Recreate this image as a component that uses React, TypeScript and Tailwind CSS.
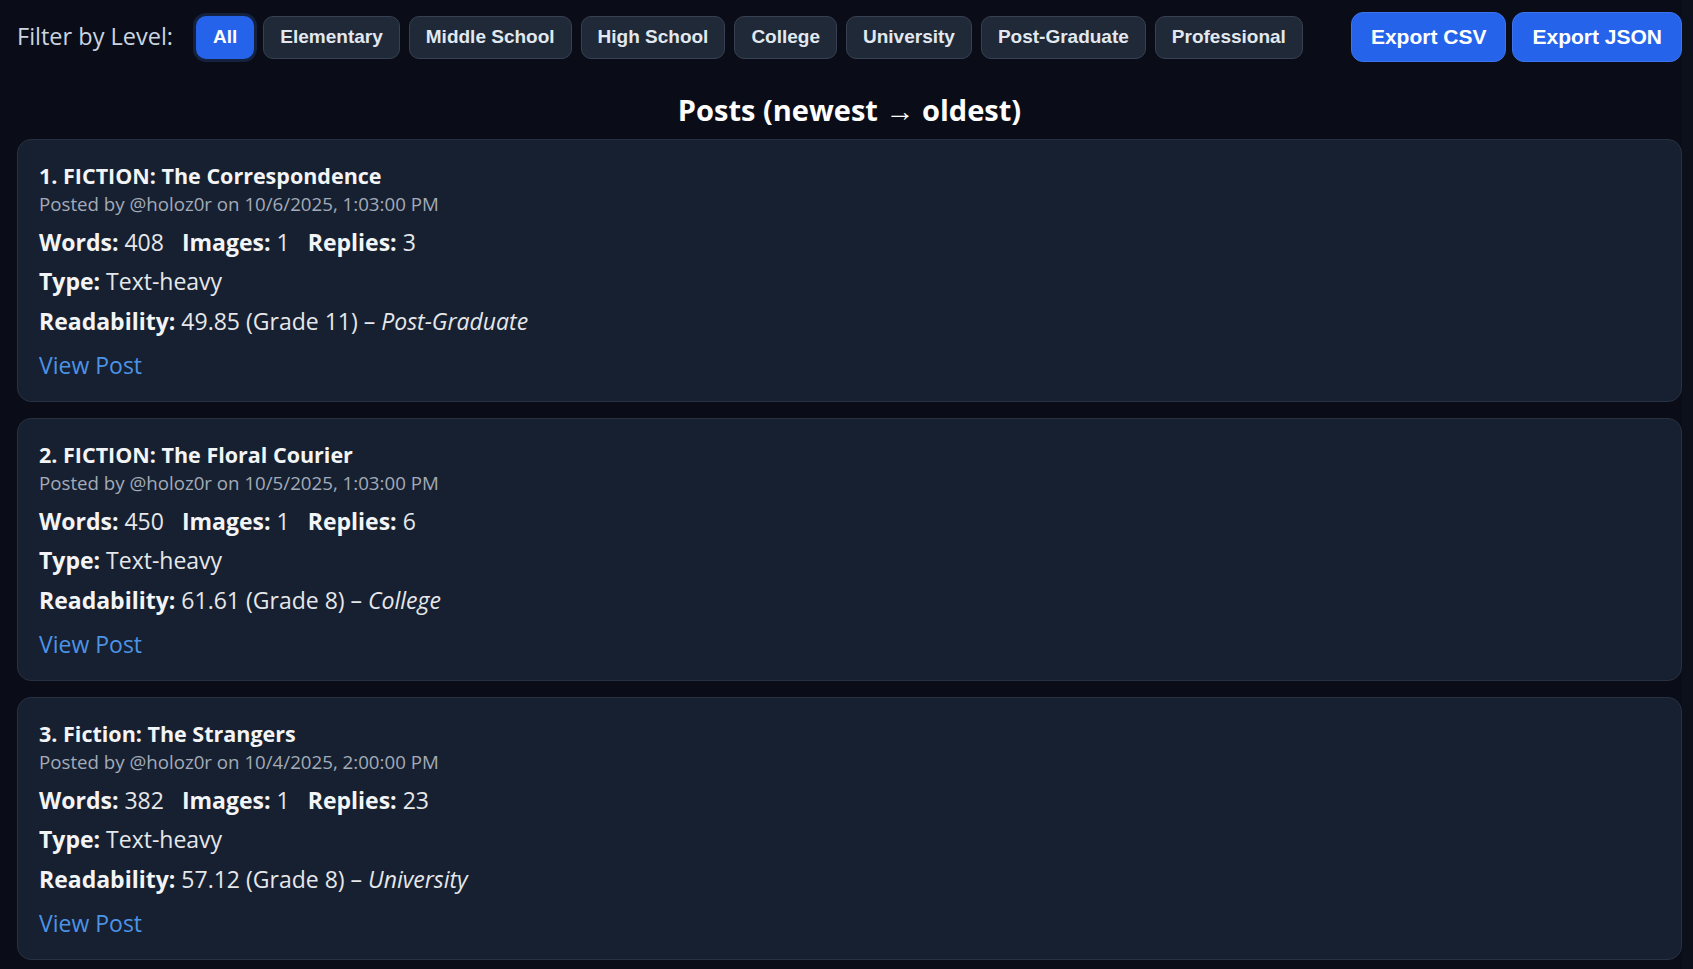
import React from 'react';

type Post = {
  title: string;
  date: string;
  words: number;
  images: number;
  replies: number;
  type: string;
  score: string;
  grade: number;
  level: string;
};

const LEVELS = [
  'All',
  'Elementary',
  'Middle School',
  'High School',
  'College',
  'University',
  'Post-Graduate',
  'Professional',
];

const POSTS: Post[] = [
  {
    title: 'FICTION: The Correspondence',
    date: '10/6/2025, 1:03:00 PM',
    words: 408,
    images: 1,
    replies: 3,
    type: 'Text-heavy',
    score: '49.85',
    grade: 11,
    level: 'Post-Graduate',
  },
  {
    title: 'FICTION: The Floral Courier',
    date: '10/5/2025, 1:03:00 PM',
    words: 450,
    images: 1,
    replies: 6,
    type: 'Text-heavy',
    score: '61.61',
    grade: 8,
    level: 'College',
  },
  {
    title: 'Fiction: The Strangers',
    date: '10/4/2025, 2:00:00 PM',
    words: 382,
    images: 1,
    replies: 23,
    type: 'Text-heavy',
    score: '57.12',
    grade: 8,
    level: 'University',
  },
];

const body = { fontFamily: '"Open Sans", "Noto Sans", sans-serif' };
const btn = { fontFamily: '"Liberation Sans", Arial, sans-serif' };

function PostCard({ post, index }: { post: Post; index: number }) {
  return (
    <div className="rounded-[14px] border border-[#283142] bg-[#172030] px-[21px] pb-[21px] pt-[22px]">
      <h3 className="text-[21.5px] font-bold leading-[28px] text-[#f3f4f6]">
        {index + 1}. {post.title}
      </h3>
      <div className="mt-[2px] text-[18.7px] leading-[24px] text-[#a3abb8]">
        Posted by @holoz0r on {post.date}
      </div>
      <div className="mt-[11px] text-[23px] leading-[30px] text-[#e5e7eb]">
        <b className="font-bold text-[#f3f4f6]">Words:</b> {post.words}
        <span className="ml-[18px]" />
        <b className="font-bold text-[#f3f4f6]">Images:</b> {post.images}
        <span className="ml-[18px]" />
        <b className="font-bold text-[#f3f4f6]">Replies:</b> {post.replies}
      </div>
      <div className="mt-[9px] text-[23px] leading-[30px] text-[#e5e7eb]">
        <b className="font-bold text-[#f3f4f6]">Type:</b> {post.type}
      </div>
      <div className="mt-[10px] text-[23px] leading-[30px] text-[#e5e7eb]">
        <b className="font-bold text-[#f3f4f6]">Readability:</b> {post.score} (Grade{' '}
        {post.grade}) – <i>{post.level}</i>
      </div>
      <a
        href="#"
        className="mt-[14px] block w-fit text-[23px] leading-[30px] text-[#4c93e6]"
      >
        View Post
      </a>
    </div>
  );
}

export default function App() {
  return (
    <div className="flex min-h-screen w-full bg-[#0a0d17]" style={body}>
      <div className="min-w-0 flex-1 pb-4 pl-[17px] pt-[12px]">
        {/* filter row + export actions */}
        <div className="flex h-[50px] items-center justify-between">
          <div className="flex items-center gap-[9px]">
            <span className="mr-[14px] text-[23.5px] font-medium text-[#cbd5e1]">
              Filter by Level:
            </span>
            {LEVELS.map((l) =>
              l === 'All' ? (
                <button
                  key={l}
                  className="h-[43px] rounded-[10px] bg-[#2563eb] px-[17px] text-[19px] font-bold text-white ring-[3px] ring-[#14213f]"
                  style={btn}
                >
                  {l}
                </button>
              ) : (
                <button
                  key={l}
                  className="h-[43px] rounded-[10px] border border-[#374151] bg-[#1f2937] px-[16px] text-[19px] font-bold text-[#e2e8f0]"
                  style={btn}
                >
                  {l}
                </button>
              ),
            )}
          </div>
          <div className="flex items-center gap-[6px]">
            <button
              className="h-[50px] rounded-[12px] border border-[#3b74ec] bg-[#2563eb] px-[19px] text-[21px] font-bold text-white"
              style={btn}
            >
              Export CSV
            </button>
            <button
              className="h-[50px] rounded-[12px] border border-[#3b74ec] bg-[#2563eb] px-[19px] text-[21px] font-bold text-white"
              style={btn}
            >
              Export JSON
            </button>
          </div>
        </div>

        <h2 className="mb-[11px] mt-[30px] text-center text-[29px] font-bold leading-[36px] text-white">
          Posts (newest → oldest)
        </h2>

        <div className="flex flex-col gap-[16px]">
          {POSTS.map((p, i) => (
            <PostCard key={i} post={p} index={i} />
          ))}
        </div>
      </div>
      {/* page scrollbar gutter */}
      <div className="w-[11px] shrink-0 bg-[#0c101b]" />
    </div>
  );
}
